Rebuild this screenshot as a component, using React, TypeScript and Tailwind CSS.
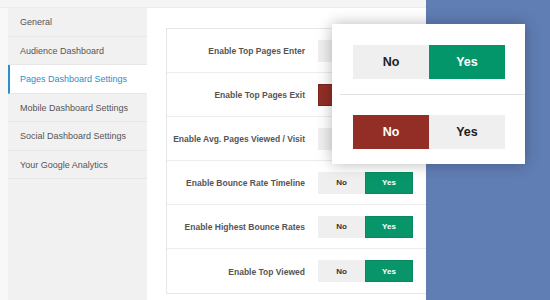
import React from "react";

const rows: { label: string; value: "yes" | "no" }[] = [
  { label: "Enable Top Pages Enter", value: "yes" },
  { label: "Enable Top Pages Exit", value: "no" },
  { label: "Enable Avg. Pages Viewed / Visit", value: "yes" },
  { label: "Enable Bounce Rate Timeline", value: "yes" },
  { label: "Enable Highest Bounce Rates", value: "yes" },
  { label: "Enable Top Viewed", value: "yes" },
];

const nav = [
  "General",
  "Audience Dashboard",
  "Pages Dashboard Settings",
  "Mobile Dashboard Settings",
  "Social Dashboard Settings",
  "Your Google Analytics",
];

function SmallToggle({ value }: { value: "yes" | "no" }) {
  return (
    <div className="flex h-[22px] text-[8px] font-bold">
      <div
        className={
          value === "no"
            ? "w-[47px] flex items-center justify-center pt-[1px] bg-[#922e25] text-white border border-[#7a241c]"
            : "w-[47px] flex items-center justify-center pt-[1px] bg-[#efefef] text-[#333]"
        }
      >
        No
      </div>
      <div
        className={
          value === "yes"
            ? "w-[48px] flex items-center justify-center pt-[1px] bg-[#08956a] text-white border border-[#0a8a60]"
            : "w-[48px] flex items-center justify-center pt-[1px] bg-[#efefef] text-[#333]"
        }
      >
        Yes
      </div>
    </div>
  );
}

export default function App() {
  return (
    <div
      className="relative w-[550px] h-[300px] overflow-hidden bg-[#f8f8f8]"
      style={{ fontFamily: '"Liberation Sans", Arial, sans-serif' }}
    >
      <div className="h-[8px] bg-[#f5f5f5] border-b border-[#ececec]" />
      <div className="flex h-[292px] pl-[8px]">
        <div className="w-[139px] bg-[#f1f1f1] flex flex-col">
          {nav.map((n, i) => (
            <div
              key={n}
              className={
                i === 2
                  ? "h-[28.5px] flex items-center pt-[2px] pl-[10px] border-l-2 border-[#2a8fd0] bg-white text-[9px] text-[#2a8fca] border-b border-b-[#e6e6e6]"
                  : "h-[28.5px] flex items-center pt-[2px] pl-[12px] text-[9px] text-[#555] border-b border-[#e6e6e6]"
              }
            >
              {n}
            </div>
          ))}
        </div>
        <div className="flex-1 bg-white pl-[19px] pt-[20px]">
          <div className="w-[300px] border border-[#e6e6e6] flex flex-col">
            {rows.map((r, i) => (
              <div
                key={r.label}
                className={
                  i < rows.length - 1
                    ? "h-[44px] flex items-center border-b border-[#ececec]"
                    : "h-[44px] flex items-center"
                }
              >
                <div className="w-[144px] pr-[6px] pt-[2px] text-right text-[8.5px] font-bold text-[#555] whitespace-nowrap">
                  {r.label}
                </div>
                <div className="ml-[7px]">
                  <SmallToggle value={r.value} />
                </div>
              </div>
            ))}
          </div>
        </div>
      </div>

      <div className="absolute top-0 right-0 w-[124px] h-[300px] bg-[#607db4]" />

      <div className="absolute left-[332px] top-[24px] w-[193px] h-[140px] bg-white shadow-[0_0_14px_rgba(0,0,0,0.28)] flex flex-col">
        <div className="pt-[21px] pl-[21px]">
          <div className="flex h-[34px] w-[152px] text-[12.5px] font-bold">
            <div className="w-[76px] flex items-center justify-center pt-[1px] bg-[#efefef] text-[#222]">No</div>
            <div className="w-[76px] flex items-center justify-center pt-[1px] bg-[#03966a] text-white">Yes</div>
          </div>
        </div>
        <div className="mt-[15px] ml-[8px] border-t border-[#e3e3e3]" />
        <div className="pt-[20px] pl-[21px]">
          <div className="flex h-[34px] w-[152px] text-[12.5px] font-bold">
            <div className="w-[76px] flex items-center justify-center pt-[1px] bg-[#922e25] text-white">No</div>
            <div className="w-[76px] flex items-center justify-center pt-[1px] bg-[#efefef] text-[#222]">Yes</div>
          </div>
        </div>
      </div>
    </div>
  );
}
